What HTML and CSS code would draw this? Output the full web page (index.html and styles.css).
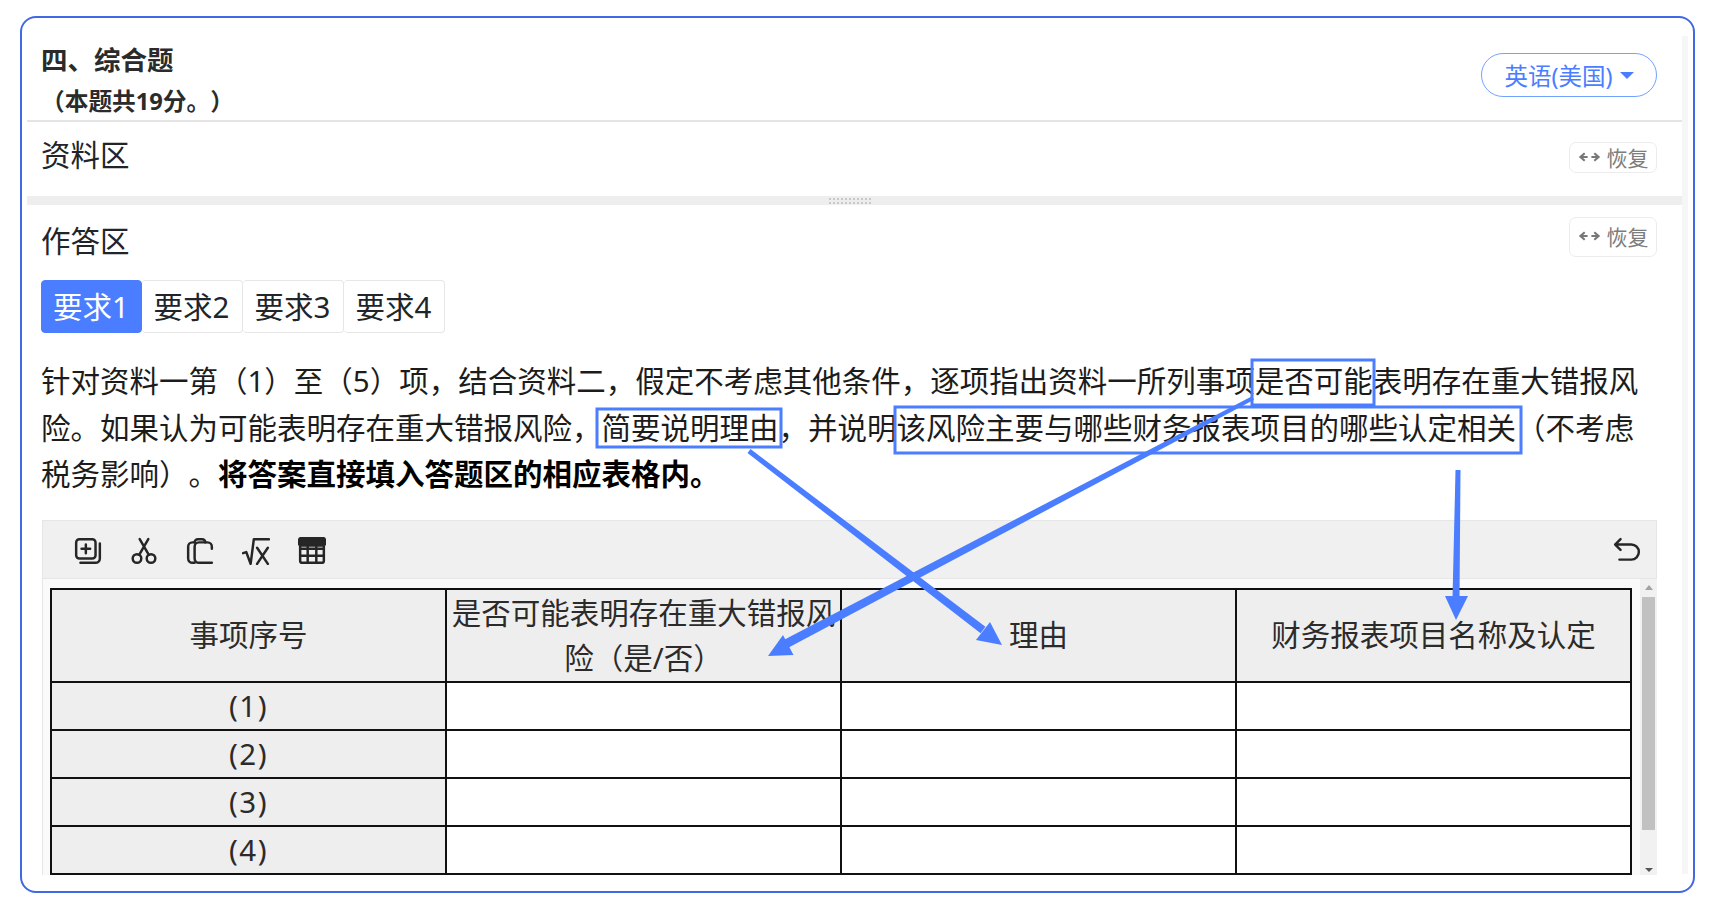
FILE: index.html
```html
<!DOCTYPE html>
<html lang="zh-CN">
<head>
<meta charset="utf-8">
<title>综合题</title>
<link rel="stylesheet" href="styles.css">
</head>
<body>
<div class="frame">
  <div class="main">
    <header class="head">
      <div class="head-text">
        <div class="head-title">四、综合题</div>
        <div class="head-sub">（本题共19分。）</div>
      </div>
      <button class="lang">英语(美国)<span class="caret"></span></button>
    </header>
    <section class="pane pane-material">
      <div class="pane-title">资料区</div>
      <button class="restore restore-small">
        <svg class="swap" viewBox="0 0 24 12"><path d="M7 2 2.500 6 7 10M2.500 6H10M17 2l4.500 4L17 10M21.500 6H14"/></svg>恢复
      </button>
    </section>
    <div class="splitter"><span class="grip"></span></div>
    <section class="pane pane-answer">
      <div class="pane-title">作答区</div>
      <button class="restore">
        <svg class="swap" viewBox="0 0 24 12"><path d="M7 2 2.500 6 7 10M2.500 6H10M17 2l4.500 4L17 10M21.500 6H14"/></svg>恢复
      </button>
    </section>
    <div class="answer">
      <div class="tabs">
        <div class="tab tab-active">要求1</div>
        <div class="tab">要求2</div>
        <div class="tab">要求3</div>
        <div class="tab">要求4</div>
      </div>
      <p class="prompt">针对资料一第（1）至（5）项，结合资料二，假定不考虑其他条件，逐项指出资料一所列事项是否可能表明存在重大错报风<br>险。如果认为可能表明存在重大错报风险，简要说明理由，并说明该风险主要与哪些财务报表项目的哪些认定相关（不考虑<br>税务影响）。<strong>将答案直接填入答题区的相应表格内。</strong></p>
      <div class="toolbar">
        <div class="tools">
          <svg class="icon" viewBox="0 0 26 26"><rect x="2" y="2" width="18" height="18" rx="3"/><path d="M7 11h8M11 7v8M6 24h14a4 4 0 0 0 4-4V6"/></svg>
          <svg class="icon" viewBox="0 0 26 26"><circle cx="6.500" cy="20" r="4"/><circle cx="19.500" cy="20" r="4"/><path d="M8.500 16.500 17 2M17.500 16.500 9 2"/></svg>
          <svg class="icon" viewBox="0 0 26 26"><path d="M8 24H6a4 4 0 0 1-4-4V9a4 4 0 0 1 4-4h2"/><path d="M24 11V9a4 4 0 0 0-4-4h-8a4 4 0 0 0-4 4v11a4 4 0 0 0 4 4h12"/><path d="M8 5a3 3 0 0 1 3-3h4a3 3 0 0 1 3 3"/></svg>
          <svg class="icon" viewBox="0 0 26 26"><path d="M1 15l3-1 4 11L11 2h14M14 10l10 15M24 10 14 25"/></svg>
          <svg class="icon icon-grid" viewBox="0 0 26 26"><rect class="grid-top" x="1" y="1" width="24" height="7" rx="2"/><rect x="2" y="2" width="22" height="22" rx="2"/><path d="M2 11h22M2 17.500h22M9 8v16M17 8v16"/></svg>
        </div>
        <svg class="icon" viewBox="0 0 26 26"><path d="M7 2 2 7l5 5M2 7h15a6.500 6.500 0 0 1 0 14H6"/></svg>
      </div>
      <div class="editor">
        <div class="sheet">
          <table class="grid">
            <tr class="row-head"><th>事项序号</th><th>是否可能表明存在重大错报风险（是/否）</th><th>理由</th><th>财务报表项目名称及认定</th></tr>
            <tr class="row-item"><th>(1)</th><td></td><td></td><td></td></tr>
            <tr class="row-item"><th>(2)</th><td></td><td></td><td></td></tr>
            <tr class="row-item"><th>(3)</th><td></td><td></td><td></td></tr>
            <tr class="row-item"><th>(4)</th><td></td><td></td><td></td></tr>
          </table>
        </div>
        <div class="scrollbar"><span class="arrow-up"></span><span class="thumb"></span><span class="arrow-down"></span></div>
      </div>
    </div>
  </div>
  <div class="strip"></div>
</div>
<svg class="marks" viewBox="0 0 1715 909">
  <rect x="1252" y="360" width="122" height="45"/>
  <rect x="597" y="409" width="184" height="38"/>
  <rect x="895" y="407" width="626" height="46"/>
  <polygon class="tip" points="750.500,449 747.500,453 980.600,633.200 985.400,626.800"/>
  <polygon class="tip" points="1002,645 976,640 990,622"/>
  <polygon class="tip" points="1254,399.800 1252,396.200 777.900,643 782.100,651"/>
  <polygon class="tip" points="768,656 793.500,655 783,635"/>
  <polygon class="tip" points="1455.500,470 1460.500,470 1459.500,598 1452.500,598"/>
  <polygon class="tip" points="1456,620 1445,596 1468,596"/>
</svg>
</body>
</html>
```
FILE: styles.css
```css
* { box-sizing: border-box; }
html, body { margin: 0; height: 100%; background: #fff; overflow: hidden; }
body {
  padding: 16px 20px;
  color: #212529;
  font-family: "Noto Sans", "Noto Sans CJK SC", sans-serif;
  font-size: 29.5px;
  text-spacing-trim: space-all;
}
.frame {
  width: 1675px;
  height: 877px;
  border: 2px solid #4169e1;
  border-radius: 16px;
  padding: 0 5px 17px;
  display: flex;
  background: #fff;
}
.main { flex: 1; min-width: 0; }
.strip { width: 6px; margin-top: 18px; background: #f6f6f6; }
.head {
  height: 104px;
  border-bottom: 2px solid #e4e4e4;
  padding: 20px 25px 0 14px;
  display: flex;
  justify-content: space-between;
}
.head-text { font-weight: 700; color: #2b2b2b; }
.head-title { font-size: 26.500px; line-height: 45px; }
.head-sub { font-size: 23.700px; line-height: 36px; }
.lang {
  margin-top: 15px;
  width: 176px;
  height: 44px;
  border: 1.500px solid #72a2ff;
  border-radius: 22px;
  background: #fff;
  color: #4a7dff;
  font: inherit;
  font-size: 23.500px;
  display: flex;
  align-items: center;
  justify-content: center;
  gap: 7px;
  padding: 0;
}
.caret {
  border-left: 7px solid transparent;
  border-right: 7px solid transparent;
  border-top: 7px solid #4a7dff;
  margin-top: 0;
}
.pane {
  display: flex;
  justify-content: space-between;
  align-items: flex-start;
  padding: 0 25px 0 14px;
}
.pane-material { height: 74px; padding-top: 11px; }
.pane-answer { height: 75px; padding-top: 14px; }
.pane-title { line-height: 44px; }
.restore {
  width: 88px;
  height: 40px;
  border: 1.500px solid #ececec;
  border-radius: 7px;
  background: #fff;
  color: #7d7d7d;
  font: inherit;
  font-size: 21px;
  display: flex;
  align-items: center;
  justify-content: center;
  gap: 6px;
  padding: 0 0 2px;
}
.pane-answer .restore { margin-top: -2px; }
.restore-small { height: 31px; margin-top: 9px; }
.swap { width: 23px; height: 12px; fill: none; stroke: #777; stroke-width: 2.200; }
.splitter {
  height: 9px;
  background: #eee;
  display: flex;
  justify-content: center;
}
.grip {
  width: 44px;
  height: 7px;
  margin: 1px 0 0 -10px;
  background-image: radial-gradient(circle, #c8c8c8 1px, transparent 1.200px);
  background-size: 4px 4px;
}
.answer { padding: 0 25px 0 14px; }
.tabs { display: flex; height: 53px; margin-left: -0.500px; }
.tab {
  width: 101px;
  border: 1.500px solid #e6e6e6;
  border-left-width: 0;
  border-radius: 4px;
  text-align: center;
  line-height: 52px;
}
.tab:first-child { border-left-width: 1.500px; }
.tab-active { background: #4a7dff; border-color: #4a7dff; color: #fff; }
.prompt {
  margin: 25px 0 22px;
  line-height: 46.500px;
  white-space: nowrap;
  color: #1c1c1c;
}
.prompt strong { color: #000; }
.toolbar {
  height: 59px;
  margin-left: 1px;
  background: #f0f0f0;
  border: 1.500px solid #e6e6e6;
  display: flex;
  align-items: center;
  justify-content: space-between;
  padding: 4px 15px 0 31px;
}
.tools { display: flex; gap: 28px; }
.icon {
  width: 28px;
  height: 28px;
  display: block;
  fill: none;
  stroke: #262626;
  stroke-width: 2.300;
  stroke-linecap: round;
  stroke-linejoin: round;
}
.icon .grid-top { fill: #262626; }
.editor {
  height: 296px;
  margin-left: 1px;
  background: #fafafa;
  border-left: 1.500px solid #e6e6e6;
  display: flex;
  overflow: hidden;
}
.sheet { flex: 1; padding: 9px 7px 0 7px; min-width: 0; }
.grid {
  width: 1582px;
  border-collapse: collapse;
  table-layout: fixed;
  background: #fff;
}
.grid th, .grid td {
  border: 2px solid #111;
  padding: 0 4px;
  font-weight: 400;
  text-align: center;
  line-height: 46px;
  height: 47.500px;
  color: #2b2b2b;
}
.grid th { background: #eee; }
.row-head th { height: 93px; line-height: 45.750px; }
.row-item th { letter-spacing: 1.500px; }
.scrollbar {
  width: 17px;
  background: #f1f1f1;
  display: flex;
  flex-direction: column;
  align-items: center;
  padding-top: 6px;
}
.arrow-up {
  border-left: 4px solid transparent;
  border-right: 4px solid transparent;
  border-bottom: 5px solid #a3a3a3;
}
.thumb { width: 13px; height: 233px; background: #c1c1c1; margin: 7px 0 38px; }
.arrow-down {
  border-left: 4px solid transparent;
  border-right: 4px solid transparent;
  border-top: 4px solid #555;
}
.marks {
  position: absolute;
  left: 0;
  top: 0;
  width: 1715px;
  height: 909px;
  pointer-events: none;
  fill: none;
  stroke: #4a7dff;
  stroke-width: 3;
}
.marks .tip { fill: #4a7dff; stroke: none; }
```
